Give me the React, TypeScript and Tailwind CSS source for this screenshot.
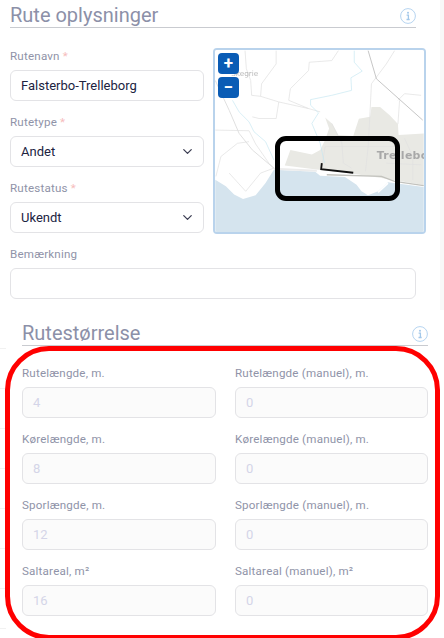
import React from "react";
import { ChevronDown } from "lucide-react";

const labelCls = "block h-[19px] text-[11.6px] leading-[18px] text-[#8f93a8] tracking-[0.2px]";
const boxCls = "flex h-[31px] items-center rounded-[6px] border border-[#e3e3e6] px-[10px] text-[13px]";

function Field({ label, req, value, select }: { label: string; req?: boolean; value?: string; select?: boolean }) {
  return (
    <div className="flex flex-col gap-[4px]">
      <span className={labelCls}>
        {label}
        {req && <span className="text-[#f6bcbc]"> *</span>}
      </span>
      <div className={`${boxCls} justify-between bg-white text-[#20233f]`}>
        <span>{value}</span>
        {select && <ChevronDown size={15} strokeWidth={2} className="mr-[-1.5px] text-[#3b3d52]" />}
      </div>
    </div>
  );
}

function Disabled({ label, value }: { label: string; value: string }) {
  return (
    <div className="flex flex-col gap-[4px]">
      <span className={labelCls}>{label}</span>
      <div className={`${boxCls} bg-[#fbfbfb] text-[#d4d5e8]`}>{value}</div>
    </div>
  );
}

function InfoIcon() {
  return (
    <svg viewBox="0 0 16 16" className="mb-[3px] mr-[0px] h-[16px] w-[16px]" fill="none">
      <circle cx="8" cy="8" r="7.4" stroke="#b6d4f0" strokeWidth="1" />
      <circle cx="8" cy="4.7" r="1" fill="#a3c8ea" />
      <path d="M6.6 7.2H8.4V11.4M6.5 11.5H9.7" stroke="#a3c8ea" strokeWidth="1.3" />
    </svg>
  );
}

function Heading({ title }: { title: string }) {
  return (
    <div className="flex h-[28px] items-end justify-between border-b border-[#c9cbd0]">
      <span className="text-[20px] leading-[24px] text-[#8c90a8]">{title}</span>
      <InfoIcon />
    </div>
  );
}

function MapView() {
  return (
    <svg viewBox="28 148 630 550" className="absolute inset-0 h-full w-full blur-[0.4px]">
      <rect x="0" y="0" width="720" height="720" fill="#ffffff" />
      <path
        d="M28 540 L60 560 L85 585 L112 598 L150 587 L180 550 L205 510 L330 516 L345 528 L420 532 L455 555 L470 575 L490 587 L520 575 L550 548 L658 562 L658 698 L28 698 Z"
        fill="#d5e4ee"
      />
      <path
        d="M360 352 L382 372 L400 405 L445 408 L462 356 L496 350 L500 320 L526 320 L556 346 L580 372 L582 405 L658 400 L658 556 L530 535 L430 520 L340 510 L238 497 L255 450 L320 464 L345 450 L360 420 L372 385 Z"
        fill="#e9e9e4"
      />
      <g fill="none" stroke="#e0e0e0" strokeWidth="2.2">
        <path d="M118 150 L122 205 L135 240 L138 285 L165 288 L220 305 L310 325 L345 335" />
        <path d="M212 150 L212 190 L168 250 L165 288" />
        <path d="M310 325 L250 300 L255 265 L310 210 L312 185 L380 180 L400 150" />
        <path d="M220 305 L212 355 L160 355 L140 350" />
        <path d="M28 390 L130 392 L150 432 L190 490 L205 505" />
        <path d="M45 470 L95 430 L130 425" />
        <path d="M45 470 L30 530 M70 520 L120 575 L165 520 L205 505" />
        <path d="M28 240 L70 330 L100 400 L140 450 L205 505" strokeWidth="3" />
        <path d="M570 150 L545 190 L500 250 L495 350 L490 440 L482 515" />
        <path d="M360 440 L580 440 M410 420 L415 490 L440 505 M360 440 L350 500" />
        <path d="M580 300 L600 280 L650 285 M580 372 L585 300 M600 415 L625 470 L625 540 M545 490 L650 495" />
        <path d="M380 370 L410 430" />
      </g>
      <path d="M490 150 L515 235 L655 360" fill="none" stroke="#b0b0b0" strokeWidth="2.2" />
      <path d="M205 507 L335 513" fill="none" stroke="#ececec" strokeWidth="6" />
      <path d="M365 525 L530 530 L570 545 L658 558" fill="none" stroke="#c2c2bd" strokeWidth="4" />
      <g fill="none" stroke="#c6e6f2" strokeWidth="2">
        <path d="M448 150 L448 185 L472 212 L438 232 L440 270 L380 285 L316 298 L316 315 L340 338 L320 370 L345 430 L358 490" />
        <path d="M80 300 L100 335 L130 365 L145 395 L180 425 L205 480" />
      </g>
      <path d="M470 565 L490 585 M520 578 L550 550 M480 540 L505 565" stroke="#ffffff" strokeWidth="5" fill="none" />
      <path d="M350 490 L348 508 L445 519" fill="none" stroke="#111111" strokeWidth="5.5" />
      <text x="76" y="226" fontFamily="'DejaVu Sans', sans-serif" fontSize="22" fill="#b9b9b9">Skegrie</text>
      <text x="516" y="478" fontFamily="'DejaVu Sans', sans-serif" fontWeight="700" fontSize="33" letterSpacing="1" fill="#a8a8a8">Trelleborg</text>
    </svg>
  );
}

function ZoomBtn({ children }: { children: React.ReactNode }) {
  return (
    <div className="flex h-[21px] w-[21px] items-center justify-center rounded-[4px] bg-[#0a5cb5] text-[17px] font-bold leading-none text-white">
      {children}
    </div>
  );
}

const behindRows = [0, 1, 2, 3, 4, 5, 6, 7];

export default function App() {
  return (
    <div className="relative h-[638px] w-[444px] overflow-hidden bg-white font-['Roboto',sans-serif]">
      <div className="absolute right-0 top-0 h-[310px] w-[4px] bg-[#f8f8f8]" />
      <div className="absolute left-0 top-[348px] flex w-[6px] flex-col gap-[39px]">
        {behindRows.map((r) => (
          <div key={r} className="h-px bg-[#f1f1f1]" />
        ))}
      </div>

      <section className="ml-[10px] w-[406px]">
        <Heading title="Rute oplysninger" />
        <div className="mt-[19px] flex w-[416px] gap-[9px]">
          <div className="flex w-[194px] shrink-0 flex-col gap-[12px]">
            <Field label="Rutenavn" req value="Falsterbo-Trelleborg" />
            <Field label="Rutetype" req value="Andet" select />
            <Field label="Rutestatus" req value="Ukendt" select />
          </div>
          <div className="relative mt-[1px] h-[186px] w-[213px] shrink-0 overflow-hidden rounded-[4px] border-2 border-[#b9d3ec] bg-white">
            <MapView />
            <div className="absolute left-[3px] top-[3px] flex flex-col gap-[3px]">
              <ZoomBtn>+</ZoomBtn>
              <ZoomBtn>−</ZoomBtn>
            </div>
            <div className="absolute left-[60px] top-[86px] h-[65px] w-[125px] rounded-[11px] border-[5px] border-black" />
          </div>
        </div>
        <div className="mt-[11px]">
          <Field label="Bemærkning" value="" />
        </div>
      </section>

      <section className="ml-[22px] mt-[19px] w-[406px]">
        <Heading title="Rutestørrelse" />
        <div className="mt-[18px] grid grid-cols-[194px_193px] gap-x-[19px] gap-y-[12px]">
          <Disabled label="Rutelængde, m." value="4" />
          <Disabled label="Rutelængde (manuel), m." value="0" />
          <Disabled label="Kørelængde, m." value="8" />
          <Disabled label="Kørelængde (manuel), m." value="0" />
          <Disabled label="Sporlængde, m." value="12" />
          <Disabled label="Sporlængde (manuel), m." value="0" />
          <Disabled label="Saltareal, m²" value="16" />
          <Disabled label="Saltareal (manuel), m²" value="0" />
        </div>
      </section>

      <div className="pointer-events-none absolute left-[5px] top-[346px] h-[294px] w-[435px] rounded-[44px] border-[5px] border-[#ff0000]" />
    </div>
  );
}
